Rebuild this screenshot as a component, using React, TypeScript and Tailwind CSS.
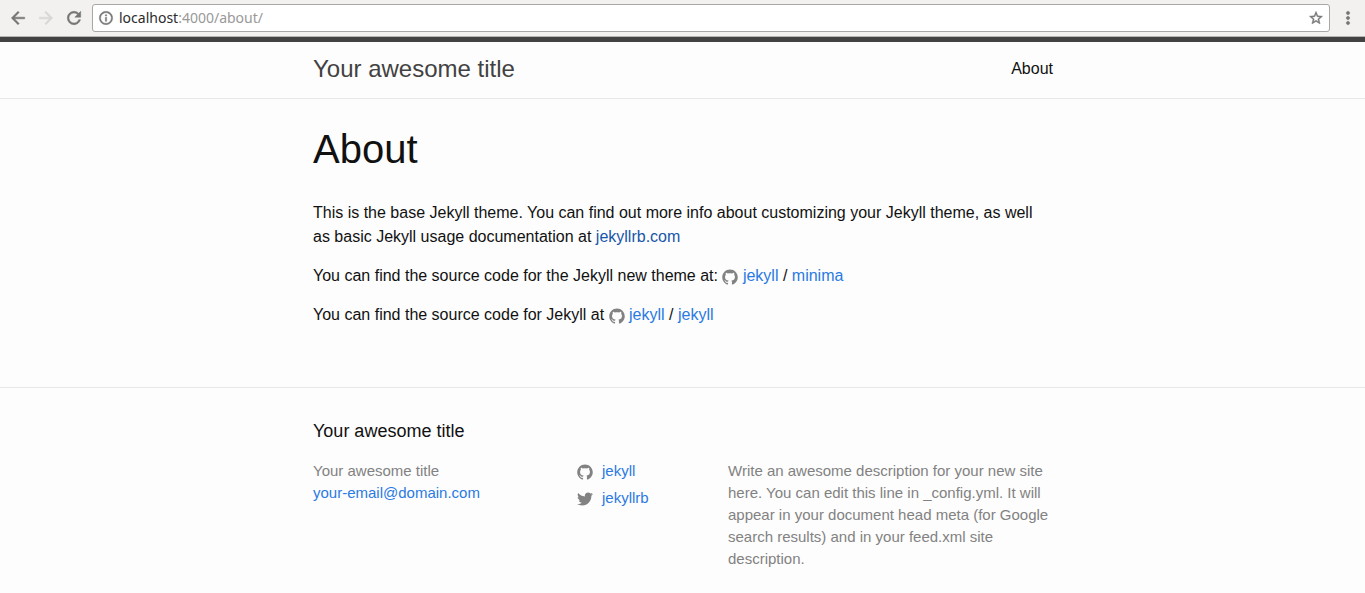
import type { ReactNode } from 'react';

function GithubIcon({ className = '' }: { className?: string }) {
  return (
    <svg viewBox="0 0 16 16" className={`size-4 fill-[#828282] ${className}`} aria-hidden="true">
      <path d="M7.999,0.431c-4.285,0-7.76,3.474-7.76,7.761 c0,3.428,2.223,6.337,5.307,7.363c0.388,0.071,0.53-0.168,0.53-0.374c0-0.184-0.007-0.672-0.01-1.32 c-2.159,0.469-2.614-1.04-2.614-1.04c-0.353-0.896-0.862-1.135-0.862-1.135c-0.705-0.481,0.053-0.472,0.053-0.472 c0.779,0.055,1.189,0.8,1.189,0.8c0.692,1.186,1.816,0.843,2.258,0.645c0.071-0.502,0.271-0.843,0.493-1.037 C4.86,11.425,3.049,10.76,3.049,7.786c0-0.847,0.302-1.54,0.799-2.082C3.768,5.507,3.501,4.718,3.924,3.65 c0,0,0.652-0.209,2.134,0.796C6.677,4.273,7.34,4.187,8,4.184c0.659,0.003,1.323,0.089,1.943,0.261 c1.482-1.004,2.132-0.796,2.132-0.796c0.423,1.068,0.157,1.857,0.077,2.054c0.497,0.542,0.798,1.235,0.798,2.082 c0,2.981-1.814,3.637-3.543,3.829c0.279,0.24,0.527,0.713,0.527,1.437c0,1.037-0.01,1.874-0.01,2.129 c0,0.208,0.14,0.449,0.534,0.373c3.081-1.028,5.302-3.935,5.302-7.362C15.76,3.906,12.285,0.431,7.999,0.431z" />
    </svg>
  );
}

function TwitterIcon({ className = '' }: { className?: string }) {
  return (
    <svg viewBox="0 0 16 16" className={`size-4 fill-[#828282] ${className}`} aria-hidden="true">
      <path d="M15.969,3.058c-0.586,0.26-1.217,0.436-1.878,0.515c0.675-0.405,1.194-1.045,1.438-1.809c-0.632,0.375-1.332,0.647-2.076,0.793c-0.596-0.636-1.446-1.033-2.387-1.033c-1.806,0-3.27,1.464-3.27,3.27 c0,0.256,0.029,0.506,0.085,0.745C5.163,5.404,2.753,4.102,1.14,2.124C0.859,2.607,0.698,3.168,0.698,3.767 c0,1.134,0.577,2.135,1.455,2.722C1.616,6.472,1.112,6.325,0.671,6.08c0,0.014,0,0.027,0,0.041c0,1.584,1.127,2.906,2.623,3.206 C3.02,9.402,2.731,9.442,2.433,9.442c-0.211,0-0.416-0.021-0.615-0.059c0.416,1.299,1.624,2.245,3.055,2.271 c-1.119,0.877-2.529,1.4-4.061,1.4c-0.264,0-0.524-0.015-0.78-0.046c1.447,0.928,3.166,1.469,5.013,1.469 c6.015,0,9.304-4.983,9.304-9.304c0-0.142-0.003-0.283-0.009-0.423C14.976,4.29,15.531,3.714,15.969,3.058z" />
    </svg>
  );
}

const materialPaths = {
  back: 'M20 11H7.83l5.59-5.59L12 4l-8 8 8 8 1.41-1.41L7.83 13H20v-2z',
  forward: 'M12 4l-1.41 1.41L16.17 11H4v2h12.17l-5.58 5.59L12 20l8-8z',
  reload:
    'M17.65 6.35C16.2 4.9 14.21 4 12 4c-4.42 0-7.99 3.58-7.99 8s3.57 8 7.99 8c3.73 0 6.84-2.55 7.73-6h-2.08c-.82 2.33-3.04 4-5.65 4-3.31 0-6-2.69-6-6s2.69-6 6-6c1.66 0 3.14.69 4.22 1.78L13 11h7V4l-2.35 2.35z',
  info: 'M11 7h2v2h-2zm0 4h2v6h-2zm1-9C6.48 2 2 6.48 2 12s4.48 10 10 10 10-4.48 10-10S17.52 2 12 2zm0 18c-4.41 0-8-3.59-8-8s3.59-8 8-8 8 3.59 8 8-3.59 8-8 8z',
  star: 'M22 9.24l-7.19-.62L12 2 9.19 8.63 2 9.24l5.46 4.73L5.82 21 12 17.27 18.18 21l-1.63-7.03L22 9.24zM12 15.4l-3.76 2.27 1-4.28-3.32-2.88 4.38-.38L12 6.1l1.71 4.04 4.38.38-3.32 2.88 1 4.28L12 15.4z',
  more: 'M12 8c1.1 0 2-.9 2-2s-.9-2-2-2-2 .9-2 2 .9 2 2 2zm0 2c-1.1 0-2 .9-2 2s.9 2 2 2 2-.9 2-2-.9-2-2-2zm0 6c-1.1 0-2 .9-2 2s.9 2 2 2 2-.9 2-2-.9-2-2-2z',
};

function Glyph({ name, className }: { name: keyof typeof materialPaths; className: string }) {
  return (
    <svg
      viewBox="0 0 24 24"
      strokeWidth={0.6}
      className={`shrink-0 fill-current stroke-current ${className}`}
      aria-hidden="true"
    >
      <path d={materialPaths[name]} />
    </svg>
  );
}

function TextLink({ href, children }: { href: string; children: ReactNode }) {
  return (
    <a href={href} className="text-[#2a7ae2] hover:underline">
      {children}
    </a>
  );
}

function BrowserBar() {
  return (
    <div className="flex h-[37px] items-center border-b border-[#b6b4b2] bg-[#f2f1f0] pr-[7px] pl-2 text-[#757575]">
      <div className="flex gap-2">
        <button type="button" aria-label="Back">
          <Glyph name="back" className="size-5" />
        </button>
        <button type="button" aria-label="Forward" disabled className="text-[#d8d7d6]">
          <Glyph name="forward" className="size-5" />
        </button>
        <button type="button" aria-label="Reload">
          <Glyph name="reload" className="size-5" />
        </button>
      </div>
      <div className="ml-2 flex h-7 min-w-0 flex-1 items-center rounded-[3px] border border-[#a9a7a5] bg-white px-[5px]">
        <button type="button" aria-label="Site information">
          <Glyph name="info" className="size-4" />
        </button>
        <button
          type="button"
          aria-label="Address"
          className="ml-[5px] flex-1 cursor-text text-left font-['Noto_Sans',sans-serif] text-sm text-[#999999]"
        >
          <span className="text-[#2b2b2b]">localhost</span>:4000/about/
        </button>
        <button type="button" aria-label="Bookmark this page">
          <Glyph name="star" className="size-4" />
        </button>
      </div>
      <button type="button" aria-label="Menu" className="ml-2">
        <Glyph name="more" className="size-5" />
      </button>
    </div>
  );
}

export default function App() {
  return (
    <div className="flex min-h-screen flex-col bg-[#fdfdfd] font-['Liberation_Sans',Arial,sans-serif] text-base text-[#111111]">
      <BrowserBar />

      <header className="border-t-[5px] border-b border-t-[#424242] border-b-[#e8e8e8]">
        <div className="mx-auto flex h-14 w-full max-w-[801px] items-center justify-between pr-[30px] pb-0.5 pl-[31px]">
          <a href="/" className="text-2xl text-[#424242]">
            Your awesome title
          </a>
          <nav>
            <a href="/about/" className="hover:underline">
              About
            </a>
          </nav>
        </div>
      </header>

      <main className="mx-auto w-full max-w-[801px] pt-[30px] pr-[30px] pb-[60px] pl-[31px]">
        <h1 className="mb-8 text-[40px] leading-10">About</h1>
        <div className="flex flex-col gap-[15px] leading-6">
          <p>
            This is the base Jekyll theme. You can find out more info about customizing your Jekyll theme, as well as
            basic Jekyll usage documentation at{' '}
            <a href="http://jekyllrb.com/" className="text-[#1756a9] hover:underline">
              jekyllrb.com
            </a>
          </p>
          <p>
            You can find the source code for the Jekyll new theme at:{' '}
            <GithubIcon className="inline-block align-[-4px]" />{' '}
            <TextLink href="https://github.com/jekyll">jekyll</TextLink> /{' '}
            <TextLink href="https://github.com/jekyll/minima">minima</TextLink>
          </p>
          <p>
            You can find the source code for Jekyll at <GithubIcon className="inline-block align-[-4px]" />{' '}
            <TextLink href="https://github.com/jekyll">jekyll</TextLink> /{' '}
            <TextLink href="https://github.com/jekyll/jekyll">jekyll</TextLink>
          </p>
        </div>
      </main>

      <footer className="border-t border-[#e8e8e8]">
        <div className="mx-auto w-full max-w-[801px] pt-[30px] pr-[30px] pb-[22px] pl-[31px]">
          <h2 className="mb-[15px] text-lg leading-[27px]">Your awesome title</h2>
          <div className="grid gap-y-4 text-[15px] leading-[22px] text-[#828282] sm:grid-cols-[264px_151px_1fr]">
            <ul>
              <li>Your awesome title</li>
              <li>
                <TextLink href="mailto:your-email@domain.com">your-email@domain.com</TextLink>
              </li>
            </ul>
            <ul className="flex flex-col gap-[5px]">
              <li>
                <a href="https://github.com/jekyll" className="flex items-center gap-[9px] text-[#2a7ae2]">
                  <GithubIcon className="mt-0.5" />
                  jekyll
                </a>
              </li>
              <li>
                <a href="https://twitter.com/jekyllrb" className="flex items-center gap-[9px] text-[#2a7ae2]">
                  <TwitterIcon className="mt-0.5" />
                  jekyllrb
                </a>
              </li>
            </ul>
            <p>
              Write an awesome description for your new site here. You can edit this line in _config.yml. It will
              appear in your document head meta (for Google search results) and in your feed.xml site description.
            </p>
          </div>
        </div>
      </footer>
    </div>
  );
}
